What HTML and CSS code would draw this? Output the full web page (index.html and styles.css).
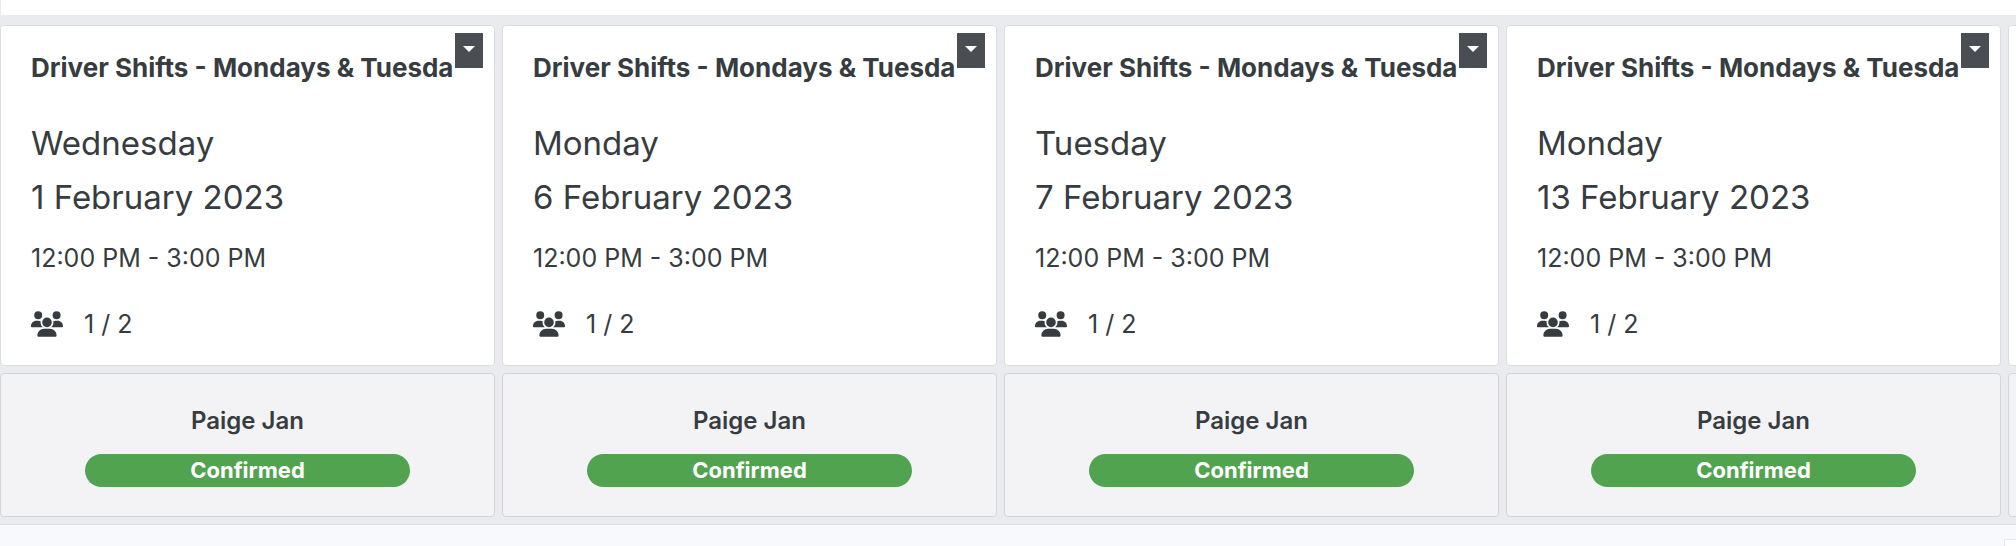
FILE: index.html
```html
<!DOCTYPE html>
<html lang="en">
<head>
    <meta charset="UTF-8">
    <meta name="viewport" content="width=device-width, initial-scale=1.0">
    <title>Driver Shifts</title>
    <link rel="stylesheet" href="styles.css">
</head>
<body>
    <!-- shared people icon -->
    <svg class="sprite" aria-hidden="true">
        <symbol id="users" viewBox="0 0 640 512">
            <path d="M144 0a80 80 0 1 1 0 160A80 80 0 1 1 144 0zM512 0a80 80 0 1 1 0 160A80 80 0 1 1 512 0zM0 298.7C0 239.8 47.8 192 106.7 192h42.7c15.9 0 31 3.5 44.6 9.7c-1.3 7.2-1.9 14.7-1.9 22.3c0 38.2 16.8 72.5 43.3 96c-.2 0-.4 0-.7 0H21.3C9.6 320 0 310.4 0 298.7zM405.3 320c-.2 0-.4 0-.7 0c26.6-23.5 43.3-57.8 43.3-96c0-7.6-.7-15-1.9-22.3c13.6-6.3 28.7-9.7 44.6-9.7h42.7C592.2 192 640 239.8 640 298.7c0 11.8-9.6 21.3-21.3 21.3H405.3zM224 224a96 96 0 1 1 192 0 96 96 0 1 1 -192 0zM128 485.3C128 411.7 187.7 352 261.3 352H378.7C452.3 352 512 411.7 512 485.3c0 14.7-11.9 26.7-26.7 26.7H154.7c-14.7 0-26.7-11.9-26.7-26.7z"/>
        </symbol>
    </svg>

    <main class="board">
        <div class="topbar"></div>
        <div class="shifts">
            <section class="shift">
                <div class="card details">
                    <button class="menu" type="button" aria-label="Shift options"></button>
                    <h2>Driver Shifts - Mondays &amp; Tuesda</h2>
                    <p class="date">Wednesday<br>1 February 2023</p>
                    <p class="time">12:00 PM - 3:00 PM</p>
                    <p class="count"><svg class="icon"><use href="#users"/></svg>1 / 2</p>
                </div>
                <div class="card person">
                    <p class="name">Paige Jan</p>
                    <p class="status">Confirmed</p>
                </div>
            </section>

            <section class="shift">
                <div class="card details">
                    <button class="menu" type="button" aria-label="Shift options"></button>
                    <h2>Driver Shifts - Mondays &amp; Tuesda</h2>
                    <p class="date">Monday<br>6 February 2023</p>
                    <p class="time">12:00 PM - 3:00 PM</p>
                    <p class="count"><svg class="icon"><use href="#users"/></svg>1 / 2</p>
                </div>
                <div class="card person">
                    <p class="name">Paige Jan</p>
                    <p class="status">Confirmed</p>
                </div>
            </section>

            <section class="shift">
                <div class="card details">
                    <button class="menu" type="button" aria-label="Shift options"></button>
                    <h2>Driver Shifts - Mondays &amp; Tuesda</h2>
                    <p class="date">Tuesday<br>7 February 2023</p>
                    <p class="time">12:00 PM - 3:00 PM</p>
                    <p class="count"><svg class="icon"><use href="#users"/></svg>1 / 2</p>
                </div>
                <div class="card person">
                    <p class="name">Paige Jan</p>
                    <p class="status">Confirmed</p>
                </div>
            </section>

            <section class="shift">
                <div class="card details">
                    <button class="menu" type="button" aria-label="Shift options"></button>
                    <h2>Driver Shifts - Mondays &amp; Tuesda</h2>
                    <p class="date">Monday<br>13 February 2023</p>
                    <p class="time">12:00 PM - 3:00 PM</p>
                    <p class="count"><svg class="icon"><use href="#users"/></svg>1 / 2</p>
                </div>
                <div class="card person">
                    <p class="name">Paige Jan</p>
                    <p class="status">Confirmed</p>
                </div>
            </section>

            <!-- next shift, runs off the right side -->
            <section class="shift">
                <div class="card details"></div>
                <div class="card person"></div>
            </section>
        </div>
    </main>

    <footer class="footer">
        <div class="panel"></div>
    </footer>
</body>
</html>
```

FILE: styles.css
```css
* {
    box-sizing: border-box;
}

body {
    font-family: Inter, "Liberation Sans", sans-serif;
    margin: 0;
    background-color: #f8f9fc;
    color: #373c41;
    overflow: hidden;
}

h2,
p {
    margin: 0;
}

.sprite {
    display: none;
}

.board {
    background-color: #e9ebee;
    border-bottom: 1px solid #dddfe4;
    padding-bottom: 7px;
}

.topbar {
    height: 15px;
    margin-left: 1px;
    margin-bottom: 10px;
    background-color: #fff;
}

.shifts {
    display: grid;
    grid-auto-flow: column;
    grid-auto-columns: calc(25% - 9px);
    grid-template-rows: auto auto;
    gap: 7px;
    overflow: hidden;
}

/* both cards line up with the cards of the other shifts */
.shift {
    display: grid;
    grid-row: span 2;
    grid-template-rows: subgrid;
}

.card {
    border: 1px solid #dcdddf;
    border-radius: 4px;
    background-color: #fff;
}

.details {
    position: relative;
    padding: 24px 30px 23px;
}

.details h2 {
    font-size: 26px;
    line-height: 36px;
    font-weight: 700;
    white-space: nowrap;
    margin-bottom: 30px;
}

.menu {
    position: absolute;
    top: 7px;
    right: 11px;
    width: 28px;
    height: 35px;
    padding: 0;
    border: 0;
    background-color: #4a4d52;
}

.menu::after {
    content: "";
    display: block;
    width: 0;
    margin: 0 auto 4px;
    border-top: 6px solid #fff;
    border-left: 6px solid transparent;
    border-right: 6px solid transparent;
}

.date {
    font-size: 33px;
    line-height: 54px;
    margin-bottom: 16px;
}

.time {
    font-size: 25px;
    line-height: 36px;
    margin-bottom: 30px;
}

.count {
    display: flex;
    align-items: center;
    gap: 21px;
    font-size: 25px;
    line-height: 36px;
}

.icon {
    width: 32px;
    height: 26px;
    fill: #373c41;
}

.person {
    padding: 29px 84px;
    background-color: #f3f3f6;
    border-color: #d3d4d6;
    text-align: center;
}

.name {
    font-size: 24px;
    line-height: 36px;
    font-weight: 600;
    margin-bottom: 15px;
}

.status {
    border-radius: 17px;
    background-color: #52a350;
    color: #fff;
    font-size: 22px;
    line-height: 33px;
    font-weight: 700;
}

.footer {
    display: flex;
    justify-content: flex-end;
    padding-top: 14px;
}

.panel {
    width: 12px;
    height: 8px;
    border: 1px solid #e6e8ed;
    border-width: 1px 0 0 1px;
    background-color: #fff;
}
```
